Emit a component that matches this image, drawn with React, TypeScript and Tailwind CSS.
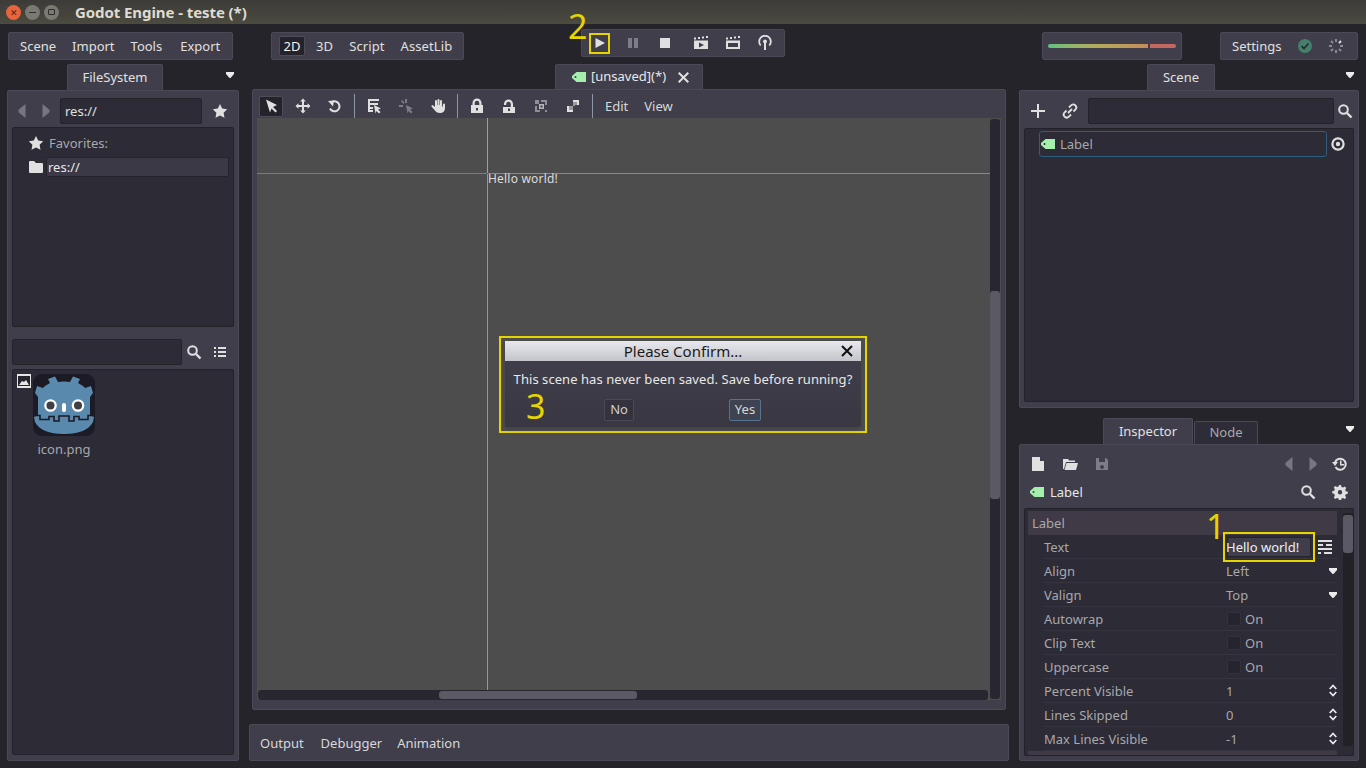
import type { ReactNode } from "react";

const font = { fontFamily: '"Noto Sans", sans-serif' };

function Ico({ size = 16, children, className = "" }: { size?: number; children: ReactNode; className?: string }) {
  return (
    <svg width={size} height={size} viewBox="0 0 16 16" fill="#e0e0e0" className={"shrink-0 " + className}>
      {children}
    </svg>
  );
}

const Star = () => <Ico><path d="M8 1l2.200 4.600 5 .7-3.600 3.500.9 5L8 12.400l-4.500 2.400.9-5L.8 6.300l5-.7z" /></Ico>;
const Caret = () => <svg width="8" height="6" viewBox="0 0 8 6" className="block"><path d="M0 0h8v2L4.500 6h-1L0 2z" fill="#ececec" /></svg>;
const Search = () => (
  <Ico>
    <circle cx="6.500" cy="6.500" r="4.300" fill="none" stroke="#e0e0e0" strokeWidth="2" />
    <path d="M10 10l4.500 4.500" stroke="#e0e0e0" strokeWidth="2.400" />
  </Ico>
);
const LeftArrow = () => <Ico><path d="M11.500 1v14L4.500 9.200V6.800z" fill="#77767f" /></Ico>;
const RightArrow = () => <Ico><path d="M4.500 1v14l7-5.800V6.800z" fill="#77767f" /></Ico>;
const Tag = () => (
  <svg width="14" height="10" viewBox="0 0 14 10" className="shrink-0">
    <path d="M4.500 0H14v10H4.500L0 6V4zM3.500 4a1 1 0 100 2 1 1 0 000-2z" fill="#a5efac" fillRule="evenodd" />
  </svg>
);
const UpDown = () => (
  <svg width="8" height="13" viewBox="0 0 8 13" className="block shrink-0">
    <path d="M.7 5L4 1.500 7.300 5M.7 8L4 11.500 7.300 8" fill="none" stroke="#e8e8e8" strokeWidth="1.800" />
  </svg>
);

function Mark({ children, className }: { children: string; className: string }) {
  return (
    <span className={"absolute text-[34px] text-[#e5d400] " + className} style={font}>
      {children}
    </span>
  );
}

function Logo() {
  return (
    <div className="relative ml-[20px] mt-[4px] h-[62px] w-[62px]">
      <svg width="62" height="62" viewBox="0 0 62 62">
        <rect width="62" height="62" rx="9" fill="#1c1a24" />
        <path
          d="M17 9L15 5l7-2.500L25 8l6-.5 6 .5 3-5.500L47 5l-2 4 5 3 2 2 6-2 2 7-3 4v18l4 2-1 5c-4 8-14 12-29 12S6 56 2 48l-1-5 4-2V23l-3-4 2-7 6 2 2-2z"
          fill="#5a89ae"
        />
        <path d="M1.500 41.500H7v4h9v-3h5V47h5v-5h10v5h5v-4.500h5v3h9v-4h5.500" fill="none" stroke="#1c1a24" strokeWidth="1.600" />
        <circle cx="17.500" cy="31.500" r="6.300" fill="#fff" />
        <circle cx="17.500" cy="31.500" r="4" fill="#3f3f46" />
        <circle cx="45" cy="31.500" r="6.300" fill="#fff" />
        <circle cx="45" cy="31.500" r="4" fill="#3f3f46" />
        <rect x="29" y="29" width="4" height="9" rx="2" fill="#fff" />
      </svg>
      <div className="absolute left-[-16px] top-0 flex h-[14px] w-[14px] items-center justify-center bg-[#e6e6e6]">
        <svg width="12" height="10" viewBox="0 0 12 10">
          <rect width="12" height="10" fill="#26252e" />
          <path d="M1 9l3-4 2 1 2-2 3 5z" fill="#e6e6e6" />
        </svg>
      </div>
    </div>
  );
}

const panel = "border border-[#4a4955] bg-[#3f3e4a] rounded-[2px]";
const inset = "border border-[#232229] bg-[#2c2b36] rounded-[2px]";

function TabBox({ children, dark = false, className = "" }: { children: ReactNode; dark?: boolean; className?: string }) {
  return (
    <div
      className={
        "flex items-center rounded-t-[2px] border border-b-0 border-[#4a4955] text-[13px] " +
        (dark ? "bg-[#2d2c37] text-[#a8a8ad] " : "bg-[#3f3e4a] text-[#e0e0e0] ") +
        className
      }
    >
      {children}
    </div>
  );
}

function LeftDock() {
  return (
    <div className="flex w-[232px] shrink-0 flex-col">
      <div className="relative flex h-[26px] pl-[60px]">
        <TabBox className="w-[96px] justify-center">FileSystem</TabBox>
        <div className="absolute right-[5px] top-[8px]"><Caret /></div>
      </div>
      <div className={panel + " flex h-[671px] flex-col px-[4px] pt-[7px]"}>
        <div className="flex h-[26px] items-center">
          <div className="flex w-[48px] gap-[8px] pl-[2px]"><LeftArrow /><RightArrow /></div>
          <div className={inset + " flex h-[26px] w-[142px] items-center pl-[4px] pt-[2px] text-[13px] text-[#e0e0e0]"}>res://</div>
          <div className="ml-[10px]"><Star /></div>
        </div>
        <div className={inset + " mt-[3px] h-[200px] pt-[4px] text-[13px]"}>
          <div className="flex h-[22px] items-center gap-[5px] pl-[15px] text-[#a8a8ad]">
            <Star />
            <span className="pt-[2px]">Favorites:</span>
          </div>
          <div className="mt-px flex h-[24px] items-center pl-[16px]">
            <svg width="14" height="12" viewBox="0 0 14 12" className="shrink-0">
              <path d="M0 1a1 1 0 011-1h4l2 2h6a1 1 0 011 1v8a1 1 0 01-1 1H1a1 1 0 01-1-1z" fill="#e0e0e0" />
            </svg>
            <div className="ml-[3px] flex h-[20px] w-[183px] items-center rounded-[2px] border border-[#25242c] bg-[#3a3945] pl-px pt-[2px] text-[#e8e8e8]">res://</div>
          </div>
        </div>
        <div className="mt-[12px] flex h-[26px] items-center">
          <div className={inset + " h-[26px] w-[170px]"} />
          <div className="ml-[4px]"><Search /></div>
          <div className="ml-[10px]">
            <Ico>
              <path d="M2 3h2v2H2zM6 3h8v2H6zM2 7h2v2H2zM6 7h8v2H6zM2 11h2v2H2zM6 11h8v2H6z" />
            </Ico>
          </div>
        </div>
        <div className={inset + " mt-[4px] h-[386px]"}>
          <Logo />
          <div className="ml-[20px] w-[62px] text-center text-[13px] leading-[26px] text-[#a8a8ad]">icon.png</div>
        </div>
      </div>
    </div>
  );
}

function ToolBtn({ children, className = "" }: { children: ReactNode; className?: string }) {
  return <div className={"flex h-[26px] w-[32px] shrink-0 items-center justify-center " + className}>{children}</div>;
}

const Divider = () => <div className="mx-[3px] h-[24px] w-px shrink-0 bg-[#8c97a3]" />;

function Center() {
  return (
    <div className="ml-[10px] flex w-[760px] shrink-0 flex-col">
      <div className="flex h-[25px] pl-[306px]">
        <TabBox className="w-[148px] pl-[16px] text-[#e8e8e8]">
          <Tag />
          <span className="ml-[5px]">[unsaved](*)</span>
          <svg width="11" height="11" viewBox="0 0 11 11" className="ml-[12px]">
            <path d="M.7.7l9.600 9.600M10.300.7L.7 10.300" stroke="#e0e0e0" strokeWidth="2" />
          </svg>
        </TabBox>
      </div>
      <div className={panel + " mx-[3px] flex h-[621px] flex-col px-[4px]"}>
        <div className="flex h-[28px] shrink-0 items-center pt-[4px]">
          <div className="ml-[2px] mr-[4px] flex h-[21px] w-[24px] items-center justify-center rounded-[2px] border border-[#4d4c59] bg-[#24232b]">
            <Ico><path d="M3 1.500L14 7l-4 2 4 4-1.500 1.500-4-4L7 14.500z" /></Ico>
          </div>
          <ToolBtn>
            <Ico><path d="M8 .5l2.800 3H9V7h3.500V5.200L15.500 8l-3 2.800V9H9v3.500h1.800L8 15.500l-2.800-3H7V9H3.500v1.800L.5 8l3-2.800V7H7V3.500H5.200z" /></Ico>
          </ToolBtn>
          <ToolBtn>
            <Ico>
              <path d="M5 4a5 5 0 11-2 6.500" fill="none" stroke="#e0e0e0" strokeWidth="2" />
              <path d="M1 3l6-.5-1 6z" />
            </Ico>
          </ToolBtn>
          <Divider />
          <ToolBtn>
            <Ico><path d="M2 1h11v2H4v2h8v2H4v2h3v2H4v1h3v2H2zM8 7l7 3.500-3 1 2.500 2.500-1.500 1.500-2.500-2.500-1 2.500z" /></Ico>
          </ToolBtn>
          <ToolBtn>
            <Ico><path d="M7 1h2v4H7zM1 7h4v2H1zM8 7l7 3.500-3 1 2.500 2.500-1.500 1.500-2.500-2.500-1 2.500zM3 3l1.500-1 2 3-1 1z" fill="#7e7d87" /></Ico>
          </ToolBtn>
          <ToolBtn>
            <Ico><path d="M5 3a1 1 0 012 0v4h.500V2a1 1 0 012 0v5h.500V3a1 1 0 012 0v6h.500l.500-2.500a1 1 0 012 0V10c0 3-2 5-5 5s-4-1-5.500-3L1.500 8.500a1 1 0 011.700-1L5 9z" /></Ico>
          </ToolBtn>
          <Divider />
          <ToolBtn>
            <Ico><path d="M3.500 7V5a4.500 4.500 0 019 0v2H14v8H2V7zm2.200 0h4.600V5a2.300 2.300 0 00-4.600 0zM7 10v2.500h2V10z" fillRule="evenodd" /></Ico>
          </ToolBtn>
          <ToolBtn>
            <Ico><path d="M12 9V6a4.500 4.500 0 00-9 0v1h2.200V6a2.300 2.300 0 014.600 0v3H14v6H2V9zM7 10.500V13h2v-2.500z" fillRule="evenodd" /></Ico>
          </ToolBtn>
          <ToolBtn>
            <Ico>
              <path d="M2 2h4v4H2zM8 2h6v2H8zM12 4h2v3h-2zM2 8h2v6H2zM4 12h3v2H4zM12 12h2v2h-2z" fill="#8f8e97" />
              <path d="M6 6h5v5H6zm1.500 1.500v2h2v-2z" fillRule="evenodd" fill="#b5b4bb" />
            </Ico>
          </ToolBtn>
          <ToolBtn>
            <Ico>
              <path d="M8 2h6v5h-2V4H8zM2 8h2v4h4v2H2z" />
              <path d="M8 4h4v3H8zM4 8h4v4H4zM8 7h2v1H8z" fill="#9a99a1" />
            </Ico>
          </ToolBtn>
          <Divider />
          <span className="ml-[9px] pt-[2px] text-[13px] text-[#d8d8da]">Edit</span>
          <span className="ml-[16px] pt-[2px] text-[13px] text-[#d8d8da]">View</span>
        </div>
        <div className="flex h-[582px] shrink-0 bg-[#4d4d4d]">
          <div className="flex w-[733px] shrink-0 flex-col">
            <div className="relative h-[572px] overflow-hidden">
              <div className="absolute left-0 top-[55px] h-px w-[230px] bg-[#b5655f]" />
              <div className="absolute left-[231px] right-0 top-[55px] h-px bg-[#9c78ab]" />
              <div className="absolute left-[230px] top-0 h-[55px] w-px bg-[#7ab77a]" />
              <div className="absolute bottom-0 left-[230px] top-[56px] w-px bg-[#6ba8b0]" />
              <span className="absolute left-[231px] top-[53px] text-[12px] leading-[16px] tracking-[0.2px] text-[#dcdcdc]">Hello world!</span>
            </div>
            <div className="ml-px h-[10px] w-[730px] rounded-[3px] bg-[#28272f] pt-px">
              <div className="ml-[181px] h-[8px] w-[198px] rounded-[3px] bg-[#5a5964]" />
            </div>
          </div>
          <div className="mt-px h-[580px] w-[10px] shrink-0 rounded-[3px] bg-[#28272f] pt-[172px]">
            <div className="h-[208px] w-full rounded-[3px] bg-[#5a5964]" />
          </div>
        </div>
      </div>
      <div className={panel + " mt-[14px] flex h-[37px] items-center gap-[16px] px-[10px] pt-[2px] text-[13px] text-[#d8d8da]"}>
        <span>Output</span>
        <span className="ml-px">Debugger</span>
        <span className="-ml-px">Animation</span>
      </div>
    </div>
  );
}

const rows: { name: string; kind: "select" | "check" | "num"; value?: string }[] = [
  { name: "Align", kind: "select", value: "Left" },
  { name: "Valign", kind: "select", value: "Top" },
  { name: "Autowrap", kind: "check" },
  { name: "Clip Text", kind: "check" },
  { name: "Uppercase", kind: "check" },
  { name: "Percent Visible", kind: "num", value: "1" },
  { name: "Lines Skipped", kind: "num", value: "0" },
  { name: "Max Lines Visible", kind: "num", value: "-1" },
];

function RightDock() {
  return (
    <div className="ml-[10px] flex w-[340px] shrink-0 flex-col">
      <div className="relative flex h-[26px] pl-[128px]">
        <TabBox className="w-[68px] justify-center">Scene</TabBox>
        <div className="absolute right-[5px] top-[8px]"><Caret /></div>
      </div>
      <div className={panel + " flex h-[318px] flex-col px-[4px] pt-[7px]"}>
        <div className="flex h-[26px] items-center">
          <div className="ml-[6px]">
            <Ico><path d="M7 1h2v6h6v2H9v6H7V9H1V7h6z" /></Ico>
          </div>
          <div className="ml-[16px]">
            <Ico>
              <path d="M6 10l4-4M7 4.500L9 2.500a2.800 2.800 0 014.500 4L11.500 8.500M9 11.500L7 13.500a2.800 2.800 0 01-4.500-4L4.500 7.500" fill="none" stroke="#e0e0e0" strokeWidth="1.800" />
            </Ico>
          </div>
          <div className={inset + " ml-[10px] h-[26px] w-[246px]"} />
          <div className="ml-[3px]"><Search /></div>
        </div>
        <div className={inset + " mt-[4px] h-[274px] pl-[14px] pt-[2px]"}>
          <div className="flex items-center">
            <div className="flex h-[26px] w-[288px] items-center gap-[5px] rounded-[3px] border border-[#2a5f80] pl-px text-[13px] text-[#a8a8ad]">
              <Tag />
              <span className="pt-[2px]">Label</span>
            </div>
            <div className="ml-[3px]">
              <Ico>
                <circle cx="8" cy="8" r="5.600" fill="none" stroke="#e0e0e0" strokeWidth="2.200" />
                <circle cx="8" cy="8" r="2.200" />
              </Ico>
            </div>
          </div>
        </div>
      </div>
      <div className="relative mt-[10px] flex h-[26px] pl-[84px]">
        <TabBox className="w-[90px] justify-center">Inspector</TabBox>
        <TabBox dark className="ml-px mt-[3px] w-[64px] justify-center">Node</TabBox>
        <div className="absolute right-[5px] top-[8px]"><Caret /></div>
      </div>
      <div className={panel + " flex h-[317px] flex-col px-[4px] pt-[7px]"}>
        <div className="flex h-[24px] shrink-0 items-center text-[13px]">
          <div className="ml-[6px]">
            <Ico><path d="M2 1h8l4 4v10H2zM10 1v4h4z" /></Ico>
          </div>
          <div className="ml-[16px]">
            <Ico><path d="M1 3h5l1 1.500h6V6H4L2 13H1zM4.500 7H16l-2 7H2.500z" /></Ico>
          </div>
          <div className="ml-[16px]">
            <Ico><path d="M2 2h10l2 2v10H2zm3 0v4h6V2zm3 7a2 2 0 100 4 2 2 0 000-4z" fill="#7e7d87" fillRule="evenodd" /></Ico>
          </div>
          <div className="ml-[171px] flex gap-[8px]"><LeftArrow /><RightArrow /></div>
          <div className="ml-[11px]">
            <Ico>
              <path d="M3 6.500a5.500 5.500 0 11.500 4.500" fill="none" stroke="#e0e0e0" strokeWidth="2" />
              <path d="M0 6h6L3 10zM8 4.500h1.500V8H12v1.500H8z" />
            </Ico>
          </div>
        </div>
        <div className="flex h-[32px] shrink-0 items-center text-[13px] text-[#e8e8e8]">
          <div className="ml-[6px] flex items-center gap-[6px]">
            <Tag />
            <span className="pt-[2px]">Label</span>
          </div>
          <div className="ml-auto mr-[6px] flex gap-[16px]">
            <Search />
            <Ico>
              <path d="M7 1h2l.500 2 1.500.600L12.800 2.500l1.400 1.400-1 1.800.600 1.500 2 .500v2l-2 .500-.600 1.500 1 1.800-1.400 1.400-1.800-1-1.500.600-.500 2H7l-.500-2-1.500-.600-1.800 1-1.400-1.400 1-1.800L2.200 9.800l-2-.500v-2l2-.500.600-1.500-1-1.800 1.400-1.400 1.800 1 1.500-.600zM8 6a2.200 2.200 0 100 4.400A2.200 2.200 0 008 6z" fillRule="evenodd" />
            </Ico>
          </div>
        </div>
        <div className={inset + " flex h-[248px] overflow-hidden pl-[3px] pt-[2px]"}>
          <div className="w-[309px] shrink-0 text-[13px] text-[#a8a8ad]">
            <div className="flex h-[24px] items-center bg-[#3f3a46] pl-[4px] pt-[2px]">Label</div>
            <div className="ml-[16px] flex h-[24px] items-center border-b border-[#35343f]">
              <span className="w-[183px] pt-[2px]">Text</span>
              <div className="flex h-[20px] w-[84px] items-center rounded-[2px] border border-[#25242c] bg-[#3f3e4a] text-[#f0f0f0]">
                <span className="-ml-[2px] whitespace-nowrap pt-[2px]">Hello world!</span>
              </div>
              <svg width="14" height="14" viewBox="0 0 14 14" className="ml-[7px]">
                <path d="M0 0h14v2H0zM0 4h5v2H0zM8 4h6v2H8zM0 8h14v2H0zM0 12h3v2H0zM6 12h8v2H6z" fill="#e0e0e0" />
              </svg>
            </div>
            {rows.map((r) => (
              <div key={r.name} className="ml-[16px] flex h-[24px] items-center border-b border-[#35343f]">
                <span className="w-[182px] pt-[2px]">{r.name}</span>
                {r.kind === "check" ? (
                  <div className="ml-px flex items-center">
                    <div className="h-[14px] w-[14px] rounded-[2px] border border-[#33323c] bg-[#26252e]" />
                    <span className="ml-[4px] pt-[2px]">On</span>
                  </div>
                ) : (
                  <span className="pt-[2px]">{r.value}</span>
                )}
                <div className="ml-auto">
                  {r.kind === "select" && <Caret />}
                  {r.kind === "num" && <UpDown />}
                </div>
              </div>
            ))}
            <div className="h-[5px] bg-[#3f3a46]" />
          </div>
          <div className="ml-[6px] mt-[2px] h-[233px] w-[10px] shrink-0 rounded-[3px] bg-[#212126] pt-[2px]">
            <div className="h-[38px] w-full rounded-[3px] bg-[#5a5964]" />
          </div>
        </div>
      </div>
    </div>
  );
}

function ConfirmDialog() {
  return (
    <div className="absolute left-[499px] top-[336px] flex h-[97px] w-[368px] items-start justify-center border-2 border-[#e5d400] pt-[3px]">
      <div className="flex h-[86px] w-[356px] flex-col rounded-[2px] bg-gradient-to-b from-[#41404c] to-[#383742] shadow-md">
        <div className="relative flex h-[20px] items-center justify-center bg-gradient-to-b from-[#e8e8ee] to-[#c4c4cc] text-[15px] text-[#1a1a1a]">
          Please Confirm...
          <svg width="12" height="12" viewBox="0 0 12 12" className="absolute right-[8px] top-[4px]">
            <path d="M1 1l10 10M11 1L1 11" stroke="#111" strokeWidth="2" />
          </svg>
        </div>
        <div className="mt-[8px] whitespace-nowrap text-center text-[13px] leading-[20px] tracking-[0.06px] text-[#e8e8e8]">This scene has never been saved. Save before running?</div>
        <div className="mt-[10px] flex pl-[99px] text-[13px]">
          <div className="flex h-[22px] w-[30px] items-center justify-center rounded-[2px] border border-[#4a4955] bg-[#33323d] text-[#d0d0d2]">No</div>
          <div className="ml-[95px] flex h-[22px] w-[32px] items-center justify-center rounded-[2px] border border-[#56748f] bg-[#3d4350] text-[#d8d8da]">Yes</div>
        </div>
      </div>
    </div>
  );
}

export default function App() {
  return (
    <div className="relative flex h-[768px] w-[1366px] flex-col overflow-hidden bg-[#24242a]" style={font}>
      <div className="flex h-[24px] shrink-0 items-center bg-gradient-to-b from-[#3c3b37] to-[#4c4b40]">
        <div className="ml-[6px] flex gap-[4px]">
          <div className="flex h-[15px] w-[15px] items-center justify-center rounded-full bg-[#e9643a] text-[9px] leading-none text-[#5a2010]">✕</div>
          <div className="flex h-[15px] w-[15px] items-center justify-center rounded-full bg-[#7a7972]"><div className="h-px w-[7px] bg-[#2f2e2a]" /></div>
          <div className="flex h-[15px] w-[15px] items-center justify-center rounded-full bg-[#7a7972]"><div className="h-[6px] w-[7px] rounded-[1px] border border-[#2f2e2a]" /></div>
        </div>
        <span className="ml-[16px] text-[15px] font-bold tracking-[-0.08px] text-[#dfdbd2]">Godot Engine - teste (*)</span>
      </div>

      <div className="mt-[8px] flex h-[28px] shrink-0 text-[13px] text-[#e0e0e0]">
        <div className={panel + " ml-[8px] flex w-[225px] items-center gap-[16px] px-[11px] pt-[2px]"}>
          <span>Scene</span><span>Import</span><span>Tools</span><span className="ml-[2px]">Export</span>
        </div>
        <div className={panel + " ml-[38px] flex w-[193px] items-center gap-[16px] px-[7px] tracking-[0.1px]"}>
          <span className="-mr-[5px] flex h-[20px] w-[26px] items-center justify-center rounded-[2px] border border-[#4d4c59] bg-[#24232b] pt-px text-[#f4f4f4]">2D</span>
          <span className="pt-[2px]">3D</span><span className="pt-[2px]">Script</span><span className="pt-[2px]">AssetLib</span>
        </div>
        <div className={panel + " ml-[117px] -mt-[3px] flex h-[28px] w-[204px] items-center self-start pl-[2px]"}>
          <ToolBtn><Ico><path d="M3.500 3l9.500 5-9.500 5z" /></Ico></ToolBtn>
          <ToolBtn className="ml-px"><Ico><path d="M3 3h4v10H3zM9 3h4v10H9z" fill="#7e7d87" /></Ico></ToolBtn>
          <ToolBtn><Ico><path d="M3 3h10v10H3z" /></Ico></ToolBtn>
          <ToolBtn className="ml-[4px]">
            <Ico><path d="M1 2.500h2v2H1zM5 2h2v2H5zM9 1.500h2v2H9zM13 1h2v2h-2zM1 5.500h14V14H1zM6 7.500v5l5-2.500z" fillRule="evenodd" /></Ico>
          </ToolBtn>
          <ToolBtn>
            <Ico><path d="M1 2.500h2v2H1zM5 2h2v2H5zM9 1.500h2v2H9zM13 1h2v2h-2zM1 5.500h14V14H1zM3 8v4h10V8z" fillRule="evenodd" /></Ico>
          </ToolBtn>
          <ToolBtn>
            <Ico>
              <path d="M3.700 10.500a5.800 5.800 0 118.600 0" fill="none" stroke="#e0e0e0" strokeWidth="1.800" />
              <path d="M7 7h2v8H7z" />
              <circle cx="8" cy="6.500" r="2" />
            </Ico>
          </ToolBtn>
        </div>
        <div className={panel + " ml-[257px] flex w-[140px] items-center gap-[2px] px-[5px]"}>
          <div className="h-[4px] w-[100px] rounded-l-full bg-gradient-to-r from-[#5ec07e] via-[#b5a95a] to-[#c48c5a]" />
          <div className="h-[4px] w-[26px] rounded-r-full bg-[#c4675e]" />
        </div>
        <div className={panel + " ml-[38px] flex w-[138px] items-center pl-[11px]"}>
          <span className="pt-[2px]">Settings</span>
          <svg width="14" height="14" viewBox="0 0 14 14" className="ml-[17px]">
            <circle cx="7" cy="7" r="7" fill="#45806a" />
            <path d="M3.500 7l2.500 2.500 4.500-5" fill="none" stroke="#26252e" strokeWidth="1.600" />
          </svg>
          <svg width="16" height="16" viewBox="0 0 16 16" className="ml-[16px]">
            <g stroke="#8b8a92" strokeWidth="2">
              <path d="M8 1v3M8 12v3M1 8h3M12 8h3" />
              <path d="M3 3l2 2M11 11l2 2M3 13l2-2" />
            </g>
            <path d="M11 5l2-2" stroke="#e0e0e0" strokeWidth="2" />
          </svg>
        </div>
      </div>

      <div className="mt-[4px] flex pl-[7px]">
        <LeftDock />
        <Center />
        <RightDock />
      </div>

      <ConfirmDialog />
      <div className="absolute left-[1223px] top-[532px] h-[30px] w-[92px] border-2 border-[#e5d400]" />
      <div className="absolute left-[589px] top-[33px] h-[21px] w-[21px] border-2 border-[#e5d400]" />
      <Mark className="left-[568px] top-[9px] leading-[34px]">2</Mark>
      <Mark className="left-[1206px] top-[509px] leading-[34px]">1</Mark>
      <Mark className="left-[526px] top-[394px] leading-[24px]">3</Mark>
    </div>
  );
}
